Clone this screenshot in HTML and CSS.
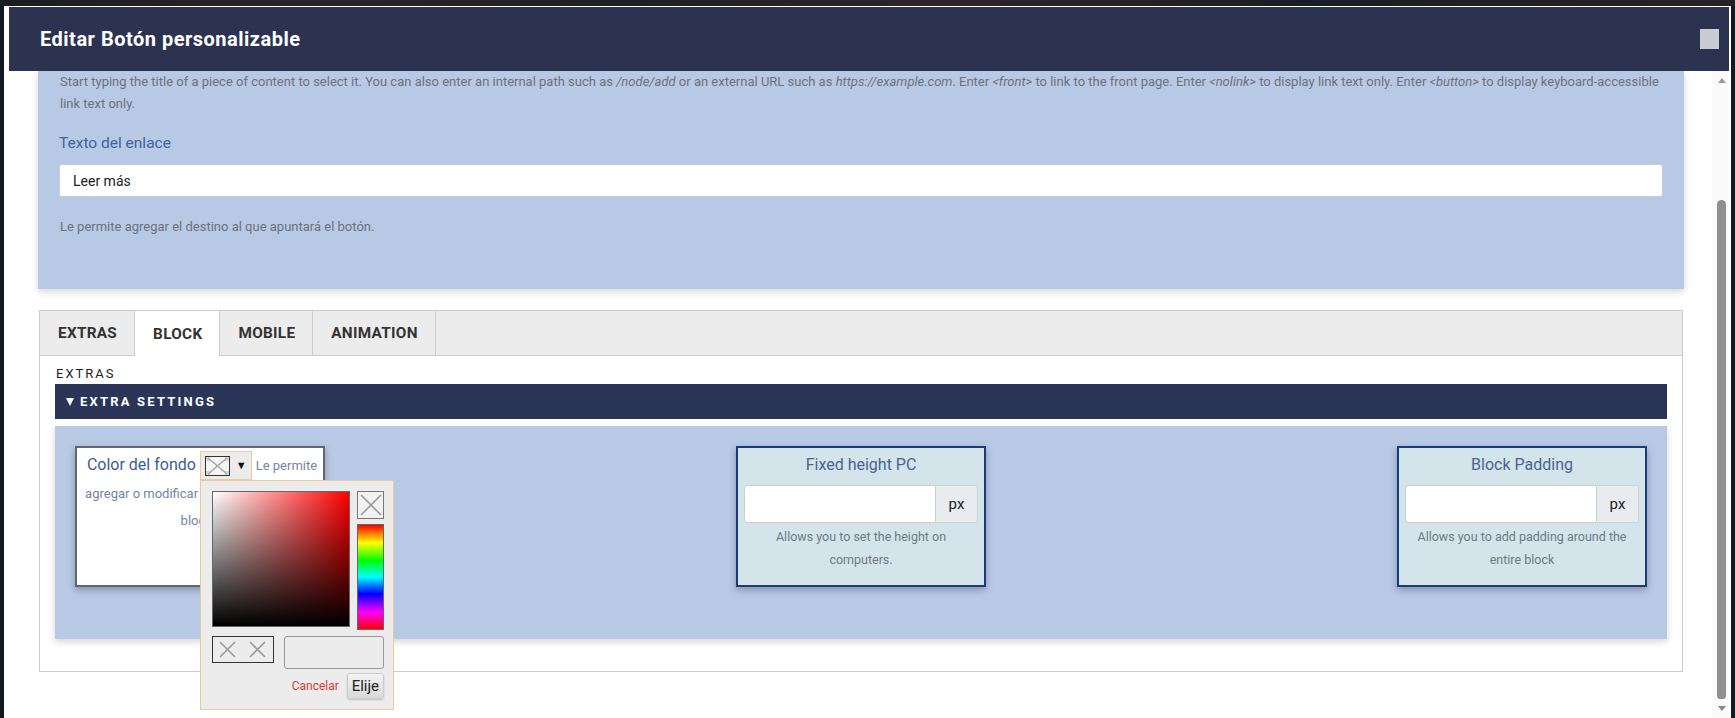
FILE: index.html
```html
<!DOCTYPE html>
<html lang="es">
<head>
  <meta charset="UTF-8" />
  <title>Editar Botón personalizable</title>
  <meta name="viewport" content="width=device-width, initial-scale=1.0" />
  <link rel="stylesheet" href="styles.css">
</head>
<body>
  <div class="backdrop-strip"></div>

  <div class="dialog">
    <div class="dialog-titlebar">
      <span class="dialog-title">Editar Botón personalizable</span>
      <button class="dialog-close" aria-label="Cerrar"></button>
    </div>

    <div class="dialog-body">
      <div class="dialog-content">

        <div class="link-panel">
          <div class="description">Start typing the title of a piece of content to select it. You can also enter an internal path such as <em>/node/add</em> or an external URL such as <em>https://example.com</em>. Enter <em>&lt;front&gt;</em> to link to the front page. Enter <em>&lt;nolink&gt;</em> to display link text only. Enter <em>&lt;button&gt;</em> to display keyboard-accessible<br>link text only.</div>
          <label class="field-label" for="link-title">Texto del enlace</label>
          <input class="form-text" id="link-title" type="text" value="Leer más" />
          <div class="description desc-after">Le permite agregar el destino al que apuntará el botón.</div>
        </div>

        <div class="tabs">
          <ul class="tab-list">
            <li class="tab">EXTRAS</li>
            <li class="tab active">BLOCK</li>
            <li class="tab">MOBILE</li>
            <li class="tab">ANIMATION</li>
          </ul>

          <div class="tab-pane">
            <div class="pane-title">EXTRAS</div>
            <div class="details-summary"><span class="caret"></span>EXTRA SETTINGS</div>

            <div class="details-body">
              <!-- background colour with spectrum picker open -->
              <div class="setting setting-color">
                <span class="setting-label">Color del fondo</span>
                <span class="color-trigger">
                  <span class="swatch-empty">
                    <svg width="23" height="18" viewBox="0 0 23 18">
                      <rect x="0" y="0" width="23" height="18" fill="#f4f4f4"/>
                      <rect x="0" y="0" width="4" height="4" fill="#d6d6d6"/>
                      <rect x="19" y="0" width="4" height="4" fill="#d6d6d6"/>
                      <rect x="0" y="14" width="4" height="4" fill="#d6d6d6"/>
                      <rect x="19" y="14" width="4" height="4" fill="#d6d6d6"/>
                      <path d="M2 1 L21 17 M21 1 L2 17" stroke="#a8a8a8" stroke-width="1.6"/>
                    </svg>
                  </span>
                  <span class="trigger-arrow">&#9660;</span>

                  <div class="color-popup">
                    <div class="picker-main">
                      <div class="sat-square"></div>
                      <div class="picker-side">
                        <span class="swatch-clear">
                          <svg width="26" height="26" viewBox="0 0 26 26">
                            <path d="M3 3 L23 23 M23 3 L3 23" stroke="#9a9a9a" stroke-width="1.6"/>
                          </svg>
                        </span>
                        <div class="hue-bar"></div>
                      </div>
                    </div>
                    <div class="picker-row">
                      <div class="palette-pair">
                        <svg width="60" height="25" viewBox="0 0 60 25">
                          <path d="M7 5 L22 20 M22 5 L7 20" stroke="#9a9a9a" stroke-width="1.6"/>
                          <path d="M37 5 L52 20 M52 5 L37 20" stroke="#9a9a9a" stroke-width="1.6"/>
                        </svg>
                      </div>
                      <input class="picker-input" type="text" />
                    </div>
                    <div class="picker-actions">
                      <a class="picker-cancel" href="#">Cancelar</a>
                      <button class="picker-choose">Elije</button>
                    </div>
                  </div>
                </span>
                <span class="color-desc">Le permite agregar o modificar el color de fondo del bloque.</span>
              </div>

              <div class="setting setting-field">
                <div class="setting-label">Fixed height PC</div>
                <div class="input-group">
                  <input class="form-control" type="text" />
                  <span class="input-addon">px</span>
                </div>
                <div class="setting-help">Allows you to set the height on computers.</div>
              </div>

              <div class="setting setting-field">
                <div class="setting-label">Block Padding</div>
                <div class="input-group">
                  <input class="form-control" type="text" />
                  <span class="input-addon">px</span>
                </div>
                <div class="setting-help">Allows you to add padding around the entire block</div>
              </div>
            </div>
          </div>
        </div>

      </div>

      <div class="scrollbar">
        <span class="scroll-arrow up"></span>
        <div class="scroll-thumb"></div>
        <span class="scroll-arrow down"></span>
      </div>
    </div>
  </div>
</body>
</html>
```

FILE: styles.css
```css
* {
  box-sizing: border-box;
}

html, body {
  margin: 0;
  padding: 0;
  height: 100%;
  overflow: hidden;
  font-family: Roboto, "Noto Sans", sans-serif;
  background: #141820;
}

/* page behind the modal peeking out at the top */
.backdrop-strip {
  height: 6px;
  background: linear-gradient(90deg, #1a1c22 0%, #2b2427 18%, #1d1f25 36%, #2e2528 55%, #1b1d24 75%, #262126 100%);
}

.dialog {
  margin-left: 4px;
  width: 1727px;
  height: calc(100vh - 6px);
  background: #fff;
  padding: 1px 2px 0 0;
  display: flex;
  flex-direction: column;
}

.dialog-titlebar {
  margin-left: 5px;
  height: 64px;
  flex: 0 0 64px;
  background: #2c3350;
  display: flex;
  align-items: center;
  justify-content: space-between;
  padding: 0 10px 0 31px;
}

.dialog-title {
  color: #fff;
  font-weight: 700;
  font-size: 20px;
  letter-spacing: 0.5px;
}

.dialog-close {
  width: 19px;
  height: 20px;
  padding: 0;
  border: none;
  background: #c9cbd3;
}

.dialog-body {
  flex: 1;
  min-height: 0;
  display: flex;
}

.dialog-content {
  flex: 1;
  padding: 0 28px 0 34px;
}

/* link field group */
.link-panel {
  background: #b8c9e6;
  padding: 0 21px 51px 21px;
  box-shadow: 0 3px 7px rgba(0, 0, 0, 0.16);
}

.description {
  font-size: 13px;
  line-height: 22px;
  color: #6d717a;
  padding-left: 1px;
  white-space: nowrap;
}

.field-label {
  display: block;
  margin-top: 17px;
  font-size: 15.5px;
  line-height: 22px;
  color: #45619a;
}

.form-text {
  display: block;
  width: 100%;
  height: 33px;
  margin-top: 10px;
  padding: 0 13px;
  border: 1px solid #c9ced6;
  border-radius: 3px;
  background: #fff;
  font-family: Roboto, sans-serif;
  font-size: 14px;
  color: #222;
}

.desc-after {
  margin-top: 19px;
}

/* vertical tabs */
.tabs {
  margin: 21px 1px 0;
  border: 1px solid #ccc;
}

.tab-list {
  display: flex;
  list-style: none;
  margin: 0;
  padding: 0;
  height: 45px;
  background: #ececec;
  border-bottom: 1px solid #ccc;
}

.tab {
  display: flex;
  align-items: center;
  padding: 0 17px 0 18px;
  border-right: 1px solid #ccc;
  font-weight: 700;
  font-size: 15.3px;
  letter-spacing: 0.3px;
  color: #333;
}

.tab.active {
  background: #fff;
  height: 45px;
}

.tab-pane {
  padding: 9px 15px 32px;
}

.pane-title {
  font-size: 13px;
  line-height: 18px;
  letter-spacing: 2px;
  color: #222;
  padding-left: 1px;
}

.details-summary {
  margin-top: 1px;
  height: 35px;
  display: flex;
  align-items: center;
  padding-left: 11px;
  background: #2a3558;
  color: #fff;
  font-weight: 700;
  font-size: 13px;
  letter-spacing: 2.2px;
}

.caret {
  width: 0;
  height: 0;
  margin-right: 6px;
  border-left: 4.5px solid transparent;
  border-right: 4.5px solid transparent;
  border-top: 8px solid #fff;
}

.details-body {
  margin-top: 7px;
  background: #b8c9e6;
  padding: 20px 20px 52px;
  display: flex;
  justify-content: space-between;
  align-items: flex-start;
  box-shadow: 0 3px 7px rgba(0, 0, 0, 0.16);
}

.setting {
  width: 250px;
  height: 141px;
  border: 2px solid;
  text-align: center;
  box-shadow: 0 3px 7px rgba(0, 0, 0, 0.28);
}

.setting-label {
  font-size: 16px;
  line-height: 22px;
  color: #4a6394;
}

/* colour picker card */
.setting-color {
  position: relative;
  background: #fff;
  border-color: #5f6673;
  padding: 3px 0 0 4px;
  line-height: 26px;
}

.setting-color .setting-label {
  color: #3e5b95;
}

.color-trigger {
  position: relative;
  display: inline-flex;
  align-items: center;
  gap: 6px;
  height: 29px;
  padding: 0 4px 0 4px;
  background: #ececec;
  border: 1px solid #f1c79c;
  vertical-align: middle;
}

.swatch-empty {
  display: block;
  width: 25px;
  height: 20px;
  border: 1px solid #333;
  line-height: 0;
}

.trigger-arrow {
  font-size: 11px;
  line-height: 1;
  color: #111;
}

.color-desc {
  font-size: 13px;
  color: #7385a6;
}

.color-popup {
  position: absolute;
  top: calc(100% + 1px);
  left: -1px;
  z-index: 10;
  width: 194px;
  height: 230px;
  padding: 10px 9px 10px 11px;
  background: #ececec;
  border: 1px solid #f1c79c;
  text-align: left;
  line-height: normal;
}

.picker-main {
  display: flex;
  gap: 7px;
}

.sat-square {
  width: 138px;
  height: 136px;
  border: 1px solid #666;
  background:
    linear-gradient(to top, #000, rgba(0, 0, 0, 0)),
    linear-gradient(to right, #fff, #f00);
}

.picker-side {
  display: flex;
  flex-direction: column;
  gap: 5px;
}

.swatch-clear {
  display: block;
  width: 27px;
  height: 28px;
  border: 1px solid #777;
  background: #f2f2f2;
  line-height: 0;
}

.hue-bar {
  width: 27px;
  height: 106px;
  border: 1px solid #666;
  background: linear-gradient(to bottom, #f00 0%, #ff0 17%, #0f0 34%, #0ff 50%, #00f 66%, #f0f 84%, #f00 100%);
}

.picker-row {
  display: flex;
  align-items: flex-start;
  gap: 10px;
  margin-top: 6px;
}

.palette-pair {
  width: 62px;
  height: 27px;
  border: 1px solid #333;
  line-height: 0;
}

.picker-input {
  width: 100px;
  height: 33px;
  border: 1px solid #999;
  border-radius: 3px;
  background: #ececec;
}

.picker-actions {
  display: flex;
  justify-content: flex-end;
  align-items: center;
  gap: 8px;
  margin-top: 4px;
}

.picker-cancel {
  font-size: 12px;
  color: #d93b36;
  text-decoration: none;
}

.picker-choose {
  width: 37px;
  height: 26px;
  padding: 0;
  border: 1px solid #ccc;
  border-radius: 3px;
  background: linear-gradient(#f4f4f4, #d9d9d9);
  box-shadow: 0 1px 2px rgba(0, 0, 0, 0.2);
  font-family: Roboto, sans-serif;
  font-size: 15px;
  color: #222;
}

/* number fields */
.setting-field {
  background: #d3e5ea;
  border-color: #1b3a7c;
  padding: 6px 6px 0;
}

.input-group {
  display: flex;
  margin-top: 9px;
  height: 38px;
}

.form-control {
  flex: 1;
  min-width: 0;
  border: 1px solid #c9ced6;
  border-radius: 3px 0 0 3px;
  background: #fff;
}

.input-addon {
  width: 42px;
  display: flex;
  align-items: center;
  justify-content: center;
  background: #e9ecef;
  border: 1px solid #ced4da;
  border-left: none;
  border-radius: 0 3px 3px 0;
  font-size: 15px;
  color: #222;
}

.setting-help {
  margin-top: 2px;
  font-size: 12.5px;
  line-height: 23px;
  color: #6f7a86;
}

/* window scrollbar */
.scrollbar {
  width: 17px;
  padding-left: 2px;
  background: #fafafa;
  display: flex;
  flex-direction: column;
  align-items: center;
}

.scroll-arrow {
  width: 0;
  height: 0;
  margin-top: 7px;
  border-left: 4px solid transparent;
  border-right: 4px solid transparent;
}

.scroll-arrow.up {
  border-bottom: 5px solid #9a9a9a;
}

.scroll-arrow.down {
  border-top: 5px solid #8a8a8a;
}

.scroll-thumb {
  width: 9px;
  flex: 0 0 499px;
  margin-top: 117px;
  background: #8f8f8f;
  border-radius: 5px 5px 4px 4px;
}
```
